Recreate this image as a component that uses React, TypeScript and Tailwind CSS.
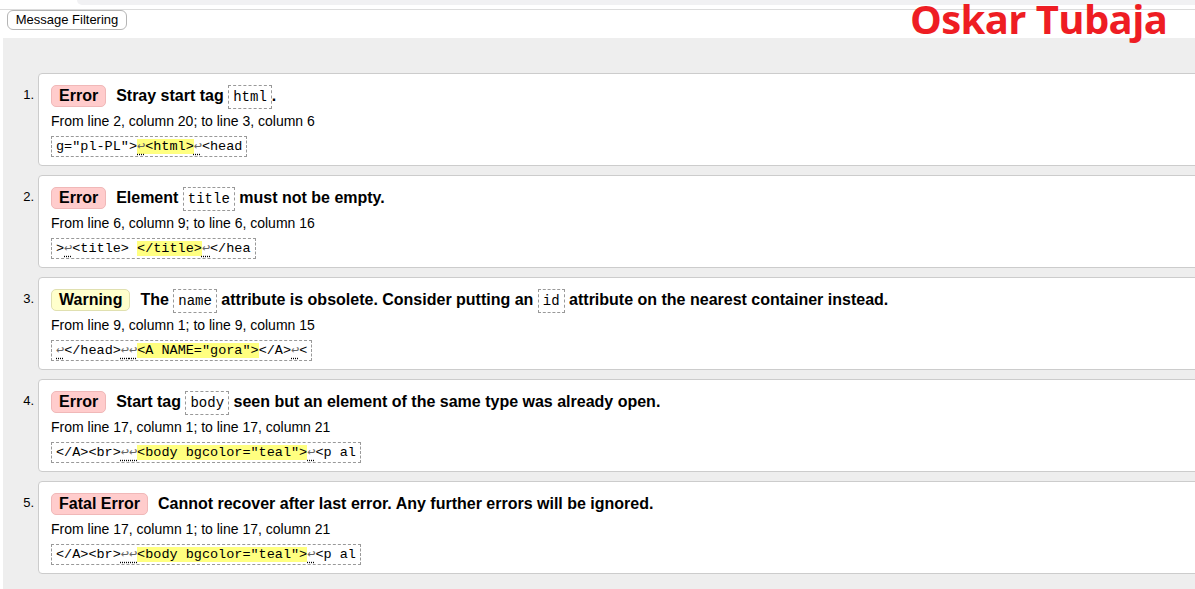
import React from "react";

const mono = { fontFamily: '"Liberation Mono", "DejaVu Sans Mono", monospace' };

function Ret() {
  return (
    <span className="text-[#666] underline decoration-dotted decoration-[#000] underline-offset-[4px]">↩</span>
  );
}

function Code({ children }: { children: React.ReactNode }) {
  return (
    <code
      className="inline-block border border-dashed border-[#999] px-[4px] leading-[22px] text-[14px] font-normal align-middle"
      style={mono}
    >
      {children}
    </code>
  );
}

function Hl({ children }: { children: React.ReactNode }) {
  return <span className="bg-[#ffff80]">{children}</span>;
}

type Msg = {
  badge: string;
  warn?: boolean;
  text: React.ReactNode;
  loc: string;
  extract: React.ReactNode;
};

const msgs: Msg[] = [
  {
    badge: "Error",
    text: (
      <>
        Stray start tag <Code>html</Code>.
      </>
    ),
    loc: "From line 2, column 20; to line 3, column 6",
    extract: (
      <>
        g="pl-PL"&gt;<Hl><Ret />&lt;html&gt;</Hl><Ret />&lt;head
      </>
    ),
  },
  {
    badge: "Error",
    text: (
      <>
        Element <Code>title</Code> must not be empty.
      </>
    ),
    loc: "From line 6, column 9; to line 6, column 16",
    extract: (
      <>
        &gt;<Ret />&lt;title&gt; <Hl>&lt;/title&gt;</Hl><Ret />&lt;/hea
      </>
    ),
  },
  {
    badge: "Warning",
    warn: true,
    text: (
      <>
        The <Code>name</Code> attribute is obsolete. Consider putting an <Code>id</Code> attribute on the nearest container instead.
      </>
    ),
    loc: "From line 9, column 1; to line 9, column 15",
    extract: (
      <>
        <Ret />&lt;/head&gt;<Ret /><Ret /><Hl>&lt;A NAME="gora"&gt;</Hl>&lt;/A&gt;<Ret />&lt;
      </>
    ),
  },
  {
    badge: "Error",
    text: (
      <>
        Start tag <Code>body</Code> seen but an element of the same type was already open.
      </>
    ),
    loc: "From line 17, column 1; to line 17, column 21",
    extract: (
      <>
        &lt;/A&gt;&lt;br&gt;<Ret /><Ret /><Hl>&lt;body bgcolor="teal"&gt;</Hl><Ret />&lt;p al
      </>
    ),
  },
  {
    badge: "Fatal Error",
    text: <>Cannot recover after last error. Any further errors will be ignored.</>,
    loc: "From line 17, column 1; to line 17, column 21",
    extract: (
      <>
        &lt;/A&gt;&lt;br&gt;<Ret /><Ret /><Hl>&lt;body bgcolor="teal"&gt;</Hl><Ret />&lt;p al
      </>
    ),
  },
];

export default function App() {
  return (
    <div
      className="relative w-[1195px] h-[589px] overflow-hidden bg-white text-black"
      style={{ fontFamily: '"Liberation Sans", Arial, sans-serif' }}
    >
      {/* top strip */}
      <div className="h-[10px] border-b border-[#dcdcdc] flex">
        <div className="w-[77px]" />
        <div className="flex-1 h-[5px] bg-[#f1f1f3] rounded-bl-[10px]" />
      </div>
      <div className="pl-[7px] h-[28px] flex items-start">
        <button className="h-[20px] w-[120px] border border-[#b5b5b5] rounded-[6px] bg-white text-[13px] leading-[18px] text-black">
          Message Filtering
        </button>
      </div>

      <div
        className="absolute top-0 left-[910px] text-[#ee1d23] font-bold text-[40px] leading-[38px] tracking-[-0.6px]"
        style={{ fontFamily: '"Open Sans", sans-serif' }}
      >
        Oskar Tubaja
      </div>

      <div className="ml-[3px] bg-[#eeeeee] h-[560px] pt-[35px]">
        <ol className="flex flex-col gap-[9px]">
          {msgs.map((m, i) => (
            <li key={i} className="flex">
              <div className="w-[35px] text-right pr-[4px] text-[13px] pt-[12px] shrink-0">{i + 1}.</div>
              <div className="flex-1 bg-white border border-[#cccccc] rounded-[4px] mr-[-10px] pl-[12px] pt-[9px] h-[93px]">
                <div className="flex items-center text-[16px] font-bold leading-[26px] whitespace-nowrap">
                  <span
                    className={
                      "inline-block rounded-[5px] px-[7px] leading-[20px] h-[22px] mr-[10px] border " +
                      (m.warn ? "bg-[#ffffcc] border-[#e0e0b0]" : "bg-[#ffcccc] border-[#f0b8b8]")
                    }
                  >
                    {m.badge}
                  </span>
                  <span>{m.text}</span>
                </div>
                <div className="text-[14px] leading-[16px] mt-[4px]">{m.loc}</div>
                <div className="mt-[4px]">
                  <code
                    className="inline-block border border-dashed border-[#999] px-[4px] text-[13.5px] leading-[19px] whitespace-pre"
                    style={mono}
                  >
                    {m.extract}
                  </code>
                </div>
              </div>
            </li>
          ))}
        </ol>
      </div>
    </div>
  );
}
